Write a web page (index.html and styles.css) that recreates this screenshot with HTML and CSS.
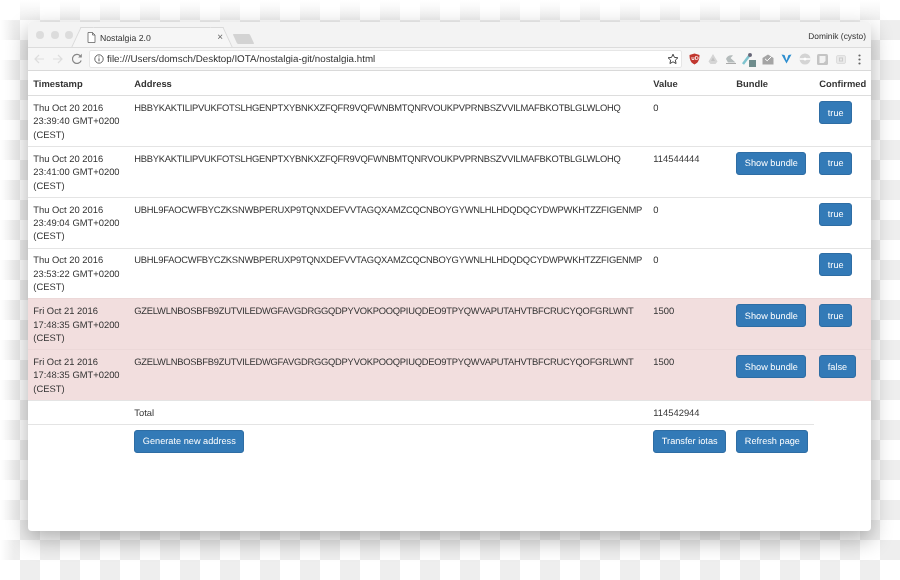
FILE: index.html
```html
<!DOCTYPE html>
<html>
<head>
<meta charset="UTF-8">
<title>Nostalgia 2.0</title>
<link rel="stylesheet" href="styles.css">
</head>
<body>
	<div class="window">
		<!-- title bar -->
		<div class="titlebar">
			<div class="lights"><i></i><i></i><i></i></div>
			<div class="tab">
				<svg class="doc" width="9" height="11" viewBox="0 0 9 11"><path d="M1 .5h4.500L8 3v7.500H1zM5.500 .5V3H8" fill="#fff" stroke="#666" stroke-width=".8"/></svg>
				<span class="tab-title">Nostalgia 2.0</span>
				<span class="tab-close">×</span>
			</div>
			<div class="newtab"></div>
			<div class="user">Dominik (cysto)</div>
		</div>

		<!-- toolbar -->
		<div class="toolbar">
			<svg class="nav" width="12" height="12" viewBox="0 0 12 12"><path d="M11 6H2M6 2L2 6l4 4" fill="none" stroke="#ddd" stroke-width="1.200"/></svg>
			<svg class="nav" width="12" height="12" viewBox="0 0 12 12"><path d="M1 6h9M6 2l4 4-4 4" fill="none" stroke="#ddd" stroke-width="1.200"/></svg>
			<svg class="nav" width="12" height="12" viewBox="0 0 12 12"><path d="M10.200 7.500A4.500 4.500 0 1 1 9.300 2.900" fill="none" stroke="#888" stroke-width="1.200"/><path d="M10.800 .8v3.700H7.100z" fill="#888"/></svg>
			<div class="omnibox">
				<svg width="10" height="10" viewBox="0 0 10 10"><circle cx="5" cy="5" r="4.200" fill="none" stroke="#555" stroke-width=".9"/><path d="M5 4.300v3M5 2.400v1" stroke="#555" stroke-width="1"/></svg>
				<span class="url">file:///Users/domsch/Desktop/IOTA/nostalgia-git/nostalgia.html</span>
				<svg class="star" width="12" height="12" viewBox="0 0 12 12"><path d="M6 1.200l1.450 3.200 3.450.4-2.550 2.350.7 3.400L6 8.800l-3.050 1.750.7-3.400L1.100 4.800l3.450-.4z" fill="none" stroke="#444" stroke-width="1"/></svg>
			</div>
			<div class="exts">
				<svg width="11" height="12" viewBox="0 0 11 12"><path d="M5.500 .5l5 1.500c0 5-1.500 8-5 9.500C2 10 .5 7 .5 2z" fill="#c1372f"/><path d="M3 4v2.500h2V4M6.500 3.500v3h1.200a1.500 1.500 0 0 0 0-3z" fill="none" stroke="#fff" stroke-width=".8"/></svg>
				<svg width="12" height="12" viewBox="0 0 12 12"><path d="M6 1l4.500 7.500L8.500 11h-5l-2-2.500z" fill="#d5d5d5"/><path d="M6 4.500L8 8H4z" fill="#c2c2c2"/></svg>
				<svg width="12" height="12" viewBox="0 0 12 12"><path d="M1 6c1-3 4-4.500 7-3.500L5.500 5l5 4.500H3z" fill="#b5bcbc"/><path d="M1 10.500h10" stroke="#aaa"/></svg>
				<svg width="15" height="15" viewBox="0 0 15 15"><path d="M1 12l6-8" stroke="#7fc4cf" stroke-width="2.500"/><circle cx="8" cy="3" r="2" fill="#667"/><rect x="7" y="8" width="7" height="7" fill="#6f8d8d"/></svg>
				<svg width="12" height="11" viewBox="0 0 12 11"><path d="M.5 4L6 .5 11.500 4v6.500H.5z" fill="#a5a5a5"/><path d="M3 4.800l2.200 2L9.500 2.500" fill="none" stroke="#fff"/></svg>
				<svg width="11" height="10" viewBox="0 0 11 10"><path d="M.5 .5L3.500 1 5.500 6.500 7.500 1 10.500 .5 5.500 9.500z" fill="#2e8fd0"/></svg>
				<svg width="12" height="12" viewBox="0 0 12 12"><circle cx="6" cy="6" r="5.500" fill="#d4d4d4"/><path d="M.5 6h11" stroke="#fff" stroke-width="1.500"/><circle cx="6" cy="6" r="1.500" fill="#fff"/></svg>
				<svg width="11" height="11" viewBox="0 0 11 11"><rect width="11" height="11" rx="1.500" fill="#c4c4c4"/><path d="M2.500 2h6v5L6.500 9h-4z" fill="#f2f2f2"/></svg>
				<svg width="10" height="9" viewBox="0 0 10 9"><rect x=".5" y=".5" width="9" height="8" rx="1.500" fill="#e9e9e9" stroke="#ddd"/><rect x="3.500" y="3" width="3" height="3" fill="none" stroke="#ccc"/></svg>
				<svg width="3" height="11" viewBox="0 0 3 11"><circle cx="1.500" cy="1.500" r="1.100" fill="#666"/><circle cx="1.500" cy="5.500" r="1.100" fill="#666"/><circle cx="1.500" cy="9.500" r="1.100" fill="#666"/></svg>
			</div>
		</div>

		<!-- page -->
		<table class="table">
			<colgroup>
				<col class="c-time"><col class="c-addr"><col class="c-val"><col class="c-bundle"><col class="c-conf">
			</colgroup>
			<tr>
				<th>Timestamp</th>
				<th>Address</th>
				<th>Value</th>
				<th>Bundle</th>
				<th>Confirmed</th>
			</tr>
			<tr>
				<td>Thu Oct 20 2016 23:39:40 GMT+0200 (CEST)</td>
				<td class="addr">HBBYKAKTILIPVUKFOTSLHGENPTXYBNKXZFQFR9VQFWNBMTQNRVOUKPVPRNBSZVVILMAFBKOTBLGLWLOHQ</td>
				<td>0</td>
				<td></td>
				<td><a class="btn">true</a></td>
			</tr>
			<tr>
				<td>Thu Oct 20 2016 23:41:00 GMT+0200 (CEST)</td>
				<td class="addr">HBBYKAKTILIPVUKFOTSLHGENPTXYBNKXZFQFR9VQFWNBMTQNRVOUKPVPRNBSZVVILMAFBKOTBLGLWLOHQ</td>
				<td>114544444</td>
				<td><a class="btn">Show bundle</a></td>
				<td><a class="btn">true</a></td>
			</tr>
			<tr>
				<td>Thu Oct 20 2016 23:49:04 GMT+0200 (CEST)</td>
				<td class="addr">UBHL9FAOCWFBYCZKSNWBPERUXP9TQNXDEFVVTAGQXAMZCQCNBOYGYWNLHLHDQDQCYDWPWKHTZZFIGENMP</td>
				<td>0</td>
				<td></td>
				<td><a class="btn">true</a></td>
			</tr>
			<tr>
				<td>Thu Oct 20 2016 23:53:22 GMT+0200 (CEST)</td>
				<td class="addr">UBHL9FAOCWFBYCZKSNWBPERUXP9TQNXDEFVVTAGQXAMZCQCNBOYGYWNLHLHDQDQCYDWPWKHTZZFIGENMP</td>
				<td>0</td>
				<td></td>
				<td><a class="btn">true</a></td>
			</tr>
			<tr class="danger">
				<td>Fri Oct 21 2016 17:48:35 GMT+0200 (CEST)</td>
				<td class="addr">GZELWLNBOSBFB9ZUTVILEDWGFAVGDRGGQDPYVOKPOOQPIUQDEO9TPYQWVAPUTAHVTBFCRUCYQOFGRLWNT</td>
				<td>1500</td>
				<td><a class="btn">Show bundle</a></td>
				<td><a class="btn">true</a></td>
			</tr>
			<tr class="danger">
				<td>Fri Oct 21 2016 17:48:35 GMT+0200 (CEST)</td>
				<td class="addr">GZELWLNBOSBFB9ZUTVILEDWGFAVGDRGGQDPYVOKPOOQPIUQDEO9TPYQWVAPUTAHVTBFCRUCYQOFGRLWNT</td>
				<td>1500</td>
				<td><a class="btn">Show bundle</a></td>
				<td><a class="btn">false</a></td>
			</tr>
			<tr>
				<td></td>
				<td>Total</td>
				<td>114542944</td>
				<td></td>
			</tr>
			<tr>
				<td></td>
				<td><a class="btn">Generate new address</a></td>
				<td><a class="btn">Transfer iotas</a></td>
				<td><a class="btn">Refresh page</a></td>
			</tr>
		</table>
	</div>
</body>
</html>
```

FILE: styles.css
```css
*{margin: 0;padding: 0;box-sizing: border-box;}
html,body{height: 100%;}
body{
	padding: 22px 29px 49px 28px;
	overflow: hidden;
	font-family: "Liberation Sans", Arial, sans-serif;
	color: #333;
	text-rendering: geometricPrecision;
	background:
		linear-gradient(#fff, rgba(255,255,255,0) 22px),
		linear-gradient(90deg, #fff, rgba(255,255,255,0) 14px),
		conic-gradient(#eee 25%, #fff 0 50%, #eee 0 75%, #fff 0) 0 0/40px 40px;
}

.window{
	height: 509px;
	background: #fff;
	border-radius: 4px;
	box-shadow: 0 8px 22px rgba(0,0,0,.32);
	overflow: hidden;
	filter: blur(.3px);
}

/* title bar */
.titlebar{display: flex;align-items: flex-end;height: 25px;background: #f3f3f3;}
.lights{display: flex;gap: 6.500px;align-self: flex-start;margin: 9px 0 0 8px;width: 42px;}
.lights i{width: 8px;height: 8px;border-radius: 50%;background: #dcdcdc;}
.tab{
	position: relative;
	display: flex;
	align-items: center;
	width: 140px;
	height: 20px;
	margin-left: 4px;
	padding: 0 0 0 5px;
	background: #f6f6f6;
	border-top: 1px solid #dadada;
	font-size: 8.700px;
	color: #333;
}
.tab:before,.tab:after{
	content: "";
	position: absolute;
	top: -1px;
	bottom: 0;
	width: 12px;
	background: #f6f6f6;
	border-top: 1px solid #dadada;
}
.tab:before{left: -6px;transform: skewX(-25deg);border-left: 1px solid #dadada;}
.tab:after{right: -6px;transform: skewX(25deg);border-right: 1px solid #dadada;}
.doc,.tab-title,.tab-close{position: relative;z-index: 1;}
.tab-title{margin-left: 4px;}
.tab-close{margin-left: auto;margin-right: -1px;font-size: 10px;color: #666;}
.newtab{
	width: 17px;
	height: 10px;
	margin: 0 0 3px 13px;
	background: #d3d3d3;
	transform: skewX(25deg);
	border-radius: 1px;
}
.user{align-self: center;margin-left: auto;padding: 2px 5px 0 0;font-size: 8.400px;color: #333;}

/* toolbar */
.toolbar{
	display: flex;
	align-items: center;
	height: 24px;
	padding: 0 0 0 5px;
	background: #f6f6f6;
	border-top: 1px solid #dcdcdc;
	border-bottom: 1px solid #d9d9d9;
}
.nav{flex: none;margin-right: 7px;}
.nav:nth-child(3){margin-right: 0;}
.omnibox{
	flex: none;
	display: flex;
	align-items: center;
	width: 593px;
	height: 18px;
	margin-left: 6px;
	padding: 0 2px 0 4px;
	background: #fff;
	border: 1px solid #e6e6e6;
	border-radius: 2px;
}
.url{margin-left: 3px;font-size: 9.800px;color: #333;}
.star{margin-left: auto;}
.exts{display: grid;grid-auto-flow: column;grid-auto-columns: 18.400px;justify-items: center;align-items: center;margin-left: 3px;}

/* page */
.table{border-collapse: collapse;table-layout: fixed;width: 843px;font-size: 9.400px;line-height: 13.400px;}
.c-time{width: 101px;}
.c-addr{width: 519px;}
.c-val{width: 83px;}
.c-bundle{width: 83px;}
.c-conf{width: 57px;}
.table th,.table td{padding: 4.800px 5.300px;text-align: left;vertical-align: top;}
.table th{font-weight: bold;height: 24.500px;padding-top: 6px;border-bottom: 1px solid #ddd;}
.table td{border-top: 1px solid #e4e4e4;}
.table tr:nth-child(2) td{border-top: 0;}
.addr{white-space: nowrap;letter-spacing: -.25px;}
.danger{background-color: #f2dede;}
.danger td{border-top-color: #ecd8d8;}
.btn{
	display: inline-block;
	padding: 4.500px 7.500px;
	background-color: #337ab7;
	border: 1px solid #2e6da4;
	border-radius: 3px;
	color: #fff;
	font-size: 9.200px;
	white-space: nowrap;
	line-height: 12px;
}
```
